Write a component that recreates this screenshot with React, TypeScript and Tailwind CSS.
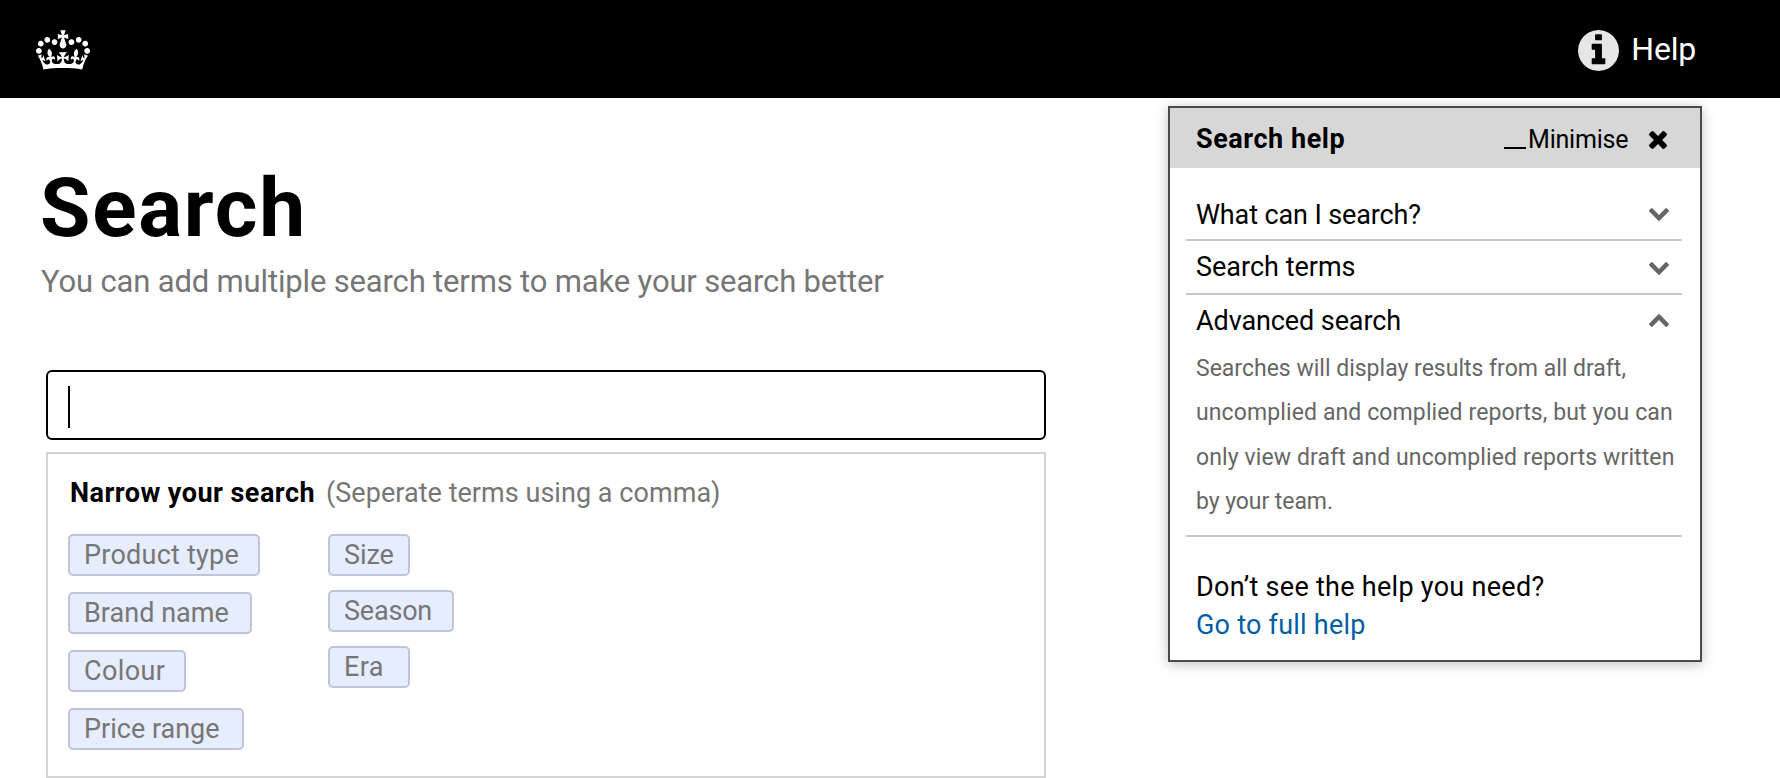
import React from 'react';

function Crown() {
  return (
    <svg viewBox="0 0 132 97" className="mt-[2px] h-[40px] w-[54px]" fill="#fff" aria-hidden="true">
      <path d="M25 30.2c3.5 1.5 7.7-.2 9.1-3.7 1.5-3.6-.2-7.8-3.9-9.2-3.6-1.4-7.6.3-9.1 3.9-1.4 3.5.3 7.5 3.9 9zM9 39.5c3.6 1.5 7.8-.2 9.2-3.7 1.5-3.6-.2-7.8-3.9-9.1-3.6-1.5-7.6.2-9.1 3.8-1.4 3.5.3 7.5 3.8 9zM4.4 57.2c3.5 1.5 7.7-.2 9.1-3.8 1.5-3.6-.2-7.7-3.9-9.1-3.5-1.5-7.6.3-9.1 3.8-1.4 3.5.3 7.6 3.9 9.1zm38.3-21.4c3.5 1.5 7.7-.2 9.1-3.8 1.5-3.6-.2-7.7-3.9-9.1-3.6-1.5-7.6.3-9.1 3.8-1.3 3.6.4 7.7 3.9 9.1zm64.4-5.6c-3.6 1.5-7.8-.2-9.1-3.7-1.5-3.6.2-7.8 3.8-9.2 3.6-1.4 7.7.3 9.2 3.9 1.3 3.5-.4 7.5-3.9 9zm15.9 9.3c-3.6 1.5-7.7-.2-9.1-3.7-1.5-3.6.2-7.8 3.7-9.1 3.6-1.5 7.7.2 9.2 3.8 1.5 3.5-.3 7.5-3.8 9zm4.7 17.7c-3.6 1.5-7.8-.2-9.2-3.8-1.5-3.6.2-7.7 3.9-9.1 3.6-1.5 7.7.3 9.2 3.8 1.3 3.5-.4 7.6-3.9 9.1zM89.3 35.8c-3.6 1.5-7.8-.2-9.2-3.8-1.4-3.6.2-7.7 3.9-9.1 3.6-1.5 7.7.3 9.2 3.8 1.4 3.6-.3 7.7-3.9 9.1zM69.7 17.7l8.9 4.7V9.3l-8.9 2.8c-.2-.3-.5-.6-.9-.9L72.4 0H59.6l3.5 11.2c-.3.3-.6.5-.9.9l-8.8-2.8v13.1l8.8-4.7c.3.3.6.7.9.9l-5 15.4v.1c-.2.8-.4 1.6-.4 2.4 0 4.1 3.1 7.5 7 8.1h.2c.3 0 .7.1 1 .1.4 0 .7 0 1-.1h.2c4-.6 7.1-4.1 7.1-8.1 0-.8-.1-1.7-.4-2.4V34l-5.1-15.4c.4-.2.7-.6 1-.9zM66 92.8c16.9 0 32.8 1.1 47.1 3.2 4-16.9 8.9-26.7 14-33.5l-9.6-3.4c1 4.9 1.1 7.2 0 10.2-1.5-1.4-3-4.3-4.2-8.7L108.6 76c2.8-2 5-3.2 7.5-3.3-4.4 9.4-10 11.9-13.6 11.2-4.3-.8-6.3-4.6-5.6-7.9 1-4.7 5.7-5.9 8-.5 4.3-8.7-3-11.4-7.6-8.8 7.1-7.2 7.9-13.5 2.1-21.1-8 6.1-8.1 12.3-4.5 20.8-4.7-5.4-12.1-2.5-9.5 6.2 3.4-5.2 7.9-2 7.2 3.1-.6 4.3-6.4 7.8-13.5 7.2-10.3-.9-10.9-8-11.2-13.8 2.5-.5 7.1 1.8 11 7.3L80.2 60c-4.1 4.4-8 5.3-12.3 5.4 1.4-4.4 8-11.6 8-11.6H55.5s6.4 7.2 7.9 11.6c-4.2-.1-8-1-12.3-5.4l1.4 16.4c3.9-5.5 8.5-7.7 10.9-7.3-.3 5.8-.9 12.8-11.1 13.8-7.2.6-12.9-2.9-13.5-7.2-.7-5 3.8-8.3 7.1-3.1 2.7-8.7-4.6-11.6-9.4-6.2 3.7-8.5 3.6-14.7-4.6-20.8-5.8 7.6-5 13.9 2.2 21.1-4.7-2.6-11.9.1-7.7 8.8 2.3-5.5 7.1-4.2 8.1.5.7 3.3-1.3 7.1-5.7 7.9-3.5.7-9-1.8-13.5-11.2 2.5.1 4.7 1.3 7.5 3.3l-4.7-15.4c-1.2 4.4-2.7 7.2-4.3 8.7-1.1-3-.9-5.3 0-10.2l-9.5 3.4c5 6.9 9.9 16.7 14 33.5 14.8-2.1 30.8-3.2 47.7-3.2z" />
    </svg>
  );
}

function InfoIcon() {
  return (
    <svg viewBox="128 128 1536 1536" className="mt-[3px] size-[41px]" fill="#e6e6e6" aria-hidden="true">
      <path d="M1152 1376v-160q0-14-9-23t-23-9h-96v-512q0-14-9-23t-23-9h-320q-14 0-23 9t-9 23v160q0 14 9 23t23 9h96v320h-96q-14 0-23 9t-9 23v160q0 14 9 23t23 9h448q14 0 23-9t9-23zm-128-896v-160q0-14-9-23t-23-9h-192q-14 0-23 9t-9 23v160q0 14 9 23t23 9h192q14 0 23-9t9-23zm640 416q0 209-103 385.5t-279.5 279.5-385.5 103-385.5-103-279.5-279.5-103-385.5 103-385.5 279.5-279.5 385.5-103 385.5 103 279.5 279.5 103 385.5z" />
    </svg>
  );
}

function CloseIcon() {
  return (
    <svg viewBox="302 366 1188 1188" className="size-[18px]" fill="#000" aria-hidden="true">
      <path d="M1490 1322q0 40-28 68l-136 136q-28 28-68 28t-68-28l-294-294-294 294q-28 28-68 28t-68-28l-136-136q-28-28-28-68t28-68l294-294-294-294q-28-28-28-68t28-68l136-136q28-28 68-28t68 28l294 294 294-294q28-28 68-28t68 28l136 136q28 28 28 68t-28 68l-294 294 294 294q28 28 28 68z" />
    </svg>
  );
}

function Chevron({ up = false }: { up?: boolean }) {
  return (
    <svg
      viewBox="90 533 1612 1035"
      className={up ? 'mr-[13px] mb-[2px] h-[13px] w-[20px] rotate-180' : 'mr-[13px] h-[13px] w-[20px]'}
      fill="#666"
      aria-hidden="true"
    >
      <path d="M1683 808l-742 741q-19 19-45 19t-45-19l-742-741q-19-19-19-45.5t19-45.5l166-165q19-19 45-19t45 19l531 531 531-531q19-19 45-19t45 19l166 165q19 19 19 45.5t-19 45.5z" />
    </svg>
  );
}

function Chip({ label, className }: { label: string; className: string }) {
  return (
    <button
      className={`flex h-[42px] items-center rounded-[5px] border-2 border-[#bfc5d9] bg-[#e6edff] text-left text-[27px] leading-[30px] whitespace-nowrap text-[#767676] ${className}`}
    >
      {label}
    </button>
  );
}

export default function App() {
  return (
    <div className="h-[778px] w-[1780px] overflow-hidden bg-white font-['Roboto',sans-serif] text-black">
      <header className="flex h-[98px] items-center justify-between bg-black pr-[84px] pl-[36px]">
        <Crown />
        <a className="flex items-center gap-[12px] text-white">
          <InfoIcon />
          <span className="text-[32px] leading-[40px] tracking-[-0.2px]">Help</span>
        </a>
      </header>

      <main className="flex items-start">
        <section className="w-[1046px] pt-[69px]">
          <h1 className="pl-[40px] text-[82px] leading-[82px] font-bold tracking-[1.7px]">Search</h1>
          <p className="mt-[13px] pl-[41px] text-[31px] leading-[40px] tracking-[-0.16px] whitespace-nowrap text-[#767676]">
            You can add multiple search terms to make your search better
          </p>

          <div className="mt-[68px] ml-[46px] flex h-[70px] items-start rounded-[6px] border-2 border-black pt-[14px] pl-[20px]">
            <span className="h-[42px] w-[2px] bg-black" />
          </div>

          <div className="mt-[12px] ml-[46px] h-[326px] border-2 border-[#d4d4d4] pt-[24px]">
            <div className="flex text-[27px] leading-[30px] whitespace-nowrap">
              <h2 className="w-[278px] pl-[22px] font-bold tracking-[0.46px]">Narrow your search</h2>
              <span className="tracking-[0.04px] text-[#767676]">(Seperate terms using a comma)</span>
            </div>
            <div className="mt-[26px] grid grid-cols-[260px_auto] justify-start pl-[20px]">
              <div className="flex flex-col gap-[16px]">
                <Chip label="Product type" className="w-[192px] pl-[14px] tracking-[0.24px]" />
                <Chip label="Brand name" className="w-[184px] pl-[14px] tracking-[0.03px]" />
                <Chip label="Colour" className="w-[118px] pl-[14px] tracking-[0.4px]" />
                <Chip label="Price range" className="w-[176px] pl-[14px]" />
              </div>
              <div className="flex flex-col gap-[14px]">
                <Chip label="Size" className="w-[82px] pl-[14px] tracking-[-0.1px]" />
                <Chip label="Season" className="w-[126px] pl-[14px] tracking-[-0.2px]" />
                <Chip label="Era" className="w-[82px] pl-[14px] tracking-[0.4px]" />
              </div>
            </div>
          </div>
        </section>

        <aside className="mt-[8px] ml-[122px] h-[556px] w-[534px] border-2 border-[#4a4a4a] bg-white shadow-[0_2px_12px_rgba(0,0,0,0.25)]">
          <div className="flex h-[60px] items-center bg-[#d7d7d7] pr-[33px] pl-[26px]">
            <h2 className="mt-[1px] text-[27px] leading-[30px] font-bold tracking-[0.54px]">Search help</h2>
            <span className="mt-[20px] ml-auto h-[2px] w-[22px] bg-black" />
            <span className="mt-[3px] ml-[2px] w-[102px] text-[25px] leading-[30px] tracking-[-0.2px]">Minimise</span>
            <span className="mt-[3px] ml-[19px]">
              <CloseIcon />
            </span>
          </div>

          <div className="mr-[18px] ml-[16px]">
            <div className="flex h-[73px] items-center justify-between border-b-2 border-[#c8c8c8] pt-[21px] pl-[10px]">
              <h3 className="mt-[2px] text-[27px] leading-[30px] tracking-[-0.12px]">What can I search?</h3>
              <Chevron />
            </div>
            <div className="flex h-[54px] items-center justify-between border-b-2 border-[#c8c8c8] pl-[10px]">
              <h3 className="text-[27px] leading-[30px]">Search terms</h3>
              <span className="mt-[2px]">
                <Chevron />
              </span>
            </div>
            <div className="border-b-2 border-[#c8c8c8] pt-[10px] pb-[11px] pl-[10px]">
              <div className="flex h-[32px] items-center justify-between">
                <h3 className="text-[27px] leading-[30px] tracking-[-0.1px]">Advanced search</h3>
                <Chevron up />
              </div>
              <p className="mt-[10px] text-[23px] leading-[44.25px] whitespace-nowrap text-[#666]">
                <span className="block">Searches will display results from all draft,</span>
                <span className="block tracking-[0.11px]">uncomplied and complied reports, but you can</span>
                <span className="block tracking-[0.11px]">only view draft and uncomplied reports written</span>
                <span className="block tracking-[-0.07px]">by your team.</span>
              </p>
            </div>
            <div className="pt-[31px] pl-[10px] text-[27px] leading-[38px]">
              <p className="tracking-[0.28px]">Don’t see the help you need?</p>
              <a className="block tracking-[0.23px] text-[#005ea5]">Go to full help</a>
            </div>
          </div>
        </aside>
      </main>
    </div>
  );
}
